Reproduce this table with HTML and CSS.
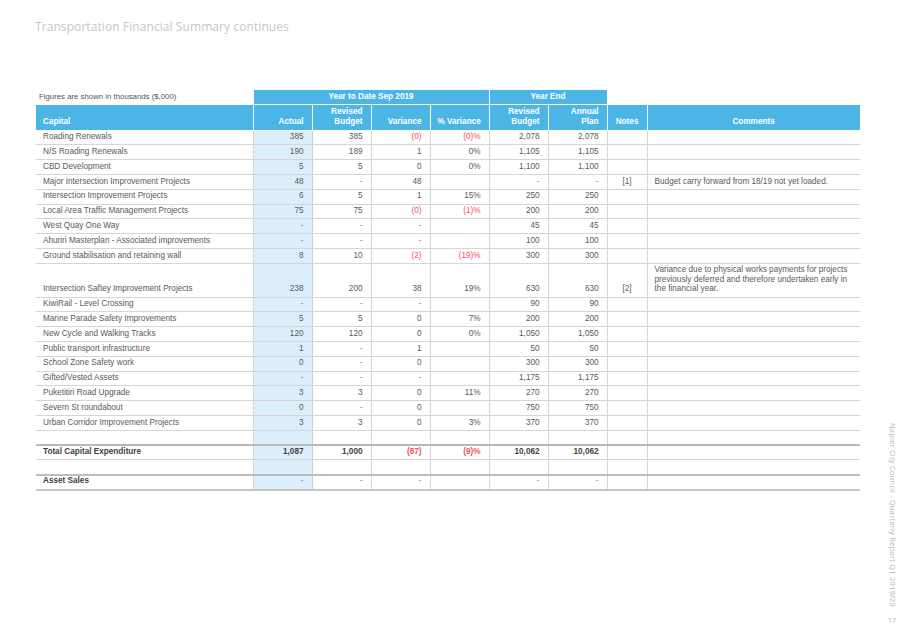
FILE: index.html
```html
<!DOCTYPE html>
<html lang="en">
<head>
<meta charset="utf-8">
<title>Transportation Financial Summary continues</title>
<link rel="stylesheet" href="styles.css">
</head>
<body>
<div class="page">
  <main class="main">
    <h1 class="title">Transportation Financial Summary continues</h1>
    <table class="fin">
      <colgroup>
        <col class="c-name"><col class="c-num"><col class="c-num"><col class="c-num"><col class="c-num"><col class="c-num"><col class="c-num"><col class="c-notes"><col class="c-comm">
      </colgroup>
      <thead>
        <tr class="h1">
          <th class="note-fig">Figures are shown in thousands ($,000)</th>
          <th class="blue ctr" colspan="4">Year to Date Sep 2019</th>
          <th class="blue ctr" colspan="2">Year End</th>
          <th class="blank" colspan="2"></th>
        </tr>
        <tr class="h2">
          <th class="blue lft">Capital</th>
          <th class="blue">Actual</th>
          <th class="blue">Revised<br>Budget</th>
          <th class="blue">Variance</th>
          <th class="blue">% Variance</th>
          <th class="blue">Revised<br>Budget</th>
          <th class="blue">Annual<br>Plan</th>
          <th class="blue ctr">Notes</th>
          <th class="blue ctr">Comments</th>
        </tr>
      </thead>
      <tbody>
        <tr><td>Roading Renewals</td><td class="act">385</td><td>385</td><td class="neg">(0)</td><td class="neg">(0)%</td><td>2,078</td><td>2,078</td><td class="nt"></td><td class="cm"></td></tr>
        <tr><td>N/S Roading Renewals</td><td class="act">190</td><td>189</td><td>1</td><td>0%</td><td>1,105</td><td>1,105</td><td class="nt"></td><td class="cm"></td></tr>
        <tr><td>CBD Development</td><td class="act">5</td><td>5</td><td>0</td><td>0%</td><td>1,100</td><td>1,100</td><td class="nt"></td><td class="cm"></td></tr>
        <tr><td>Major Intersection Improvement Projects</td><td class="act">48</td><td class="dash">-</td><td>48</td><td></td><td class="dash">-</td><td class="dash">-</td><td class="nt">[1]</td><td class="cm">Budget carry forward from 18/19 not yet loaded.</td></tr>
        <tr><td>Intersection Improvement Projects</td><td class="act">6</td><td>5</td><td>1</td><td>15%</td><td>250</td><td>250</td><td class="nt"></td><td class="cm"></td></tr>
        <tr><td>Local Area Traffic Management Projects</td><td class="act">75</td><td>75</td><td class="neg">(0)</td><td class="neg">(1)%</td><td>200</td><td>200</td><td class="nt"></td><td class="cm"></td></tr>
        <tr><td>West Quay One Way</td><td class="act dash">-</td><td class="dash">-</td><td class="dash">-</td><td></td><td>45</td><td>45</td><td class="nt"></td><td class="cm"></td></tr>
        <tr><td>Ahuriri Masterplan - Associated improvements</td><td class="act dash">-</td><td class="dash">-</td><td class="dash">-</td><td></td><td>100</td><td>100</td><td class="nt"></td><td class="cm"></td></tr>
        <tr><td>Ground stabilisation and retaining wall</td><td class="act">8</td><td>10</td><td class="neg">(2)</td><td class="neg">(19)%</td><td>300</td><td>300</td><td class="nt"></td><td class="cm"></td></tr>
        <tr class="tall"><td>Intersection Saftey Improvement Projects</td><td class="act">238</td><td>200</td><td>38</td><td>19%</td><td>630</td><td>630</td><td class="nt">[2]</td><td class="cm">Variance due to physical works payments for projects<br>previously deferred and therefore undertaken early in<br>the financial year.</td></tr>
        <tr><td>KiwiRail - Level Crossing</td><td class="act dash">-</td><td class="dash">-</td><td class="dash">-</td><td></td><td>90</td><td>90</td><td class="nt"></td><td class="cm"></td></tr>
        <tr><td>Marine Parade Safety Improvements</td><td class="act">5</td><td>5</td><td>0</td><td>7%</td><td>200</td><td>200</td><td class="nt"></td><td class="cm"></td></tr>
        <tr><td>New Cycle and Walking Tracks</td><td class="act">120</td><td>120</td><td>0</td><td>0%</td><td>1,050</td><td>1,050</td><td class="nt"></td><td class="cm"></td></tr>
        <tr><td>Public transport infrastructure</td><td class="act">1</td><td class="dash">-</td><td>1</td><td></td><td>50</td><td>50</td><td class="nt"></td><td class="cm"></td></tr>
        <tr><td>School Zone Safety work</td><td class="act">0</td><td class="dash">-</td><td>0</td><td></td><td>300</td><td>300</td><td class="nt"></td><td class="cm"></td></tr>
        <tr><td>Gifted/Vested Assets</td><td class="act dash">-</td><td class="dash">-</td><td class="dash">-</td><td></td><td>1,175</td><td>1,175</td><td class="nt"></td><td class="cm"></td></tr>
        <tr><td>Puketitiri Road Upgrade</td><td class="act">3</td><td>3</td><td>0</td><td>11%</td><td>270</td><td>270</td><td class="nt"></td><td class="cm"></td></tr>
        <tr><td>Severn St roundabout</td><td class="act">0</td><td class="dash">-</td><td>0</td><td></td><td>750</td><td>750</td><td class="nt"></td><td class="cm"></td></tr>
        <tr><td>Urban Corridor Improvement Projects</td><td class="act">3</td><td>3</td><td>0</td><td>3%</td><td>370</td><td>370</td><td class="nt"></td><td class="cm"></td></tr>
        <tr class="spacer"><td></td><td class="act"></td><td></td><td></td><td></td><td></td><td></td><td class="nt"></td><td class="cm"></td></tr>
        <tr class="total"><td>Total Capital Expenditure</td><td class="act">1,087</td><td>1,000</td><td class="neg">(87)</td><td class="neg">(9)%</td><td>10,062</td><td>10,062</td><td class="nt"></td><td class="cm"></td></tr>
        <tr class="spacer"><td></td><td class="act"></td><td></td><td></td><td></td><td></td><td></td><td class="nt"></td><td class="cm"></td></tr>
        <tr class="asset"><td class="bold">Asset Sales</td><td class="act dash">-</td><td class="dash">-</td><td class="dash">-</td><td></td><td class="dash">-</td><td class="dash">-</td><td class="nt"></td><td class="cm"></td></tr>
      </tbody>
    </table>
  </main>
  <aside class="side">
    <span class="side-text">Napier City Council - Quarterly Report Q1 2019/20</span>
    <span class="side-num">17</span>
  </aside>
</div>
</body>
</html>
```
FILE: styles.css
```css
* { box-sizing: border-box; }
html, body { margin: 0; padding: 0; background: #ffffff; }
body { font-family: "Liberation Sans", Arial, sans-serif; }

.page {
  width: 906px;
  height: 635px;
  display: flex;
  overflow: hidden;
}

.main {
  width: 860px;
  padding: 0 0 0 36px;
}

.title {
  margin: 0;
  padding: 19px 0 0 0;
  height: 90px;
  font-family: "Open Sans", "DejaVu Sans", sans-serif;
  font-weight: 400;
  font-size: 12px;
  line-height: 16px;
  letter-spacing: 0.08px;
  color: #c6c6c6;
  margin-left: -1px;
}

.fin {
  width: 823px;
  table-layout: fixed;
  border-collapse: collapse;
  font-size: 8.2px;
  line-height: 9.6px;
  color: #5a5a5a;
}

.c-name { width: 217px; }
.c-num { width: 59px; }
.c-notes { width: 40px; }
.c-comm { width: 213px; }

.fin th, .fin td {
  padding: 0 8px 2.5px 7px;
  vertical-align: bottom;
  white-space: nowrap;
  overflow: hidden;
}

.fin thead th {
  color: #ffffff;
  font-weight: 700;
  text-align: right;
}

.fin th.blue {
  background: #4bb5e5;
  border: 1px solid #ffffff;
}
.fin th.blue:first-child { border-left: 0; }
.fin th.lft { text-align: left; }
.fin th.ctr { text-align: center; padding-left: 4px; padding-right: 4px; }

.fin .h1 { height: 14px; }
.fin .h1 th { padding-bottom: 2px; border-top: 0; }
.fin .h1 th.note-fig {
  text-align: left;
  font-weight: 400;
  font-size: 7.8px;
  color: #555555;
  padding-left: 3px;
  border: 0;
}
.fin .h1 th.blank { background: transparent; border: 0; border-left: 1px solid #ffffff; }

.fin .h2 { height: 26px; }
.fin .h2 th { padding-bottom: 3px; }

.fin tbody tr { height: 14.82px; }
.fin tbody td {
  text-align: right;
  border-bottom: 1px solid #d6d6d6;
  border-right: 1px solid #d6d6d6;
}
.fin tbody td:first-child { text-align: left; }
.fin tbody td.cm { border-right: 0; text-align: left; white-space: normal; }
.fin tbody td.nt { text-align: center; padding-left: 2px; padding-right: 2px; }

.fin tbody td.act {
  background: #ddeefb;
  border-left: 1px solid #bcd3e4;
  border-right: 1px solid #bcd3e4;
}

.fin .neg { color: #f0525c; }
.fin .dash { color: #8a8a8a; }

.fin tr.tall { height: 33.7px; }

.fin tr.total td {
  font-weight: 700;
  color: #3f3f3f;
  border-top: 2px solid #b8b8b8;
}
.fin tr.total td.neg { color: #f0525c; }

.fin tr.asset td {
  border-top: 2px solid #bdbdbd;
  border-bottom: 2px solid #c6c6c6;
}
.fin td.bold { font-weight: 700; color: #3f3f3f; }

.side {
  flex: 1;
  display: flex;
  flex-direction: column;
  align-items: center;
  justify-content: flex-end;
  padding: 0 0 10px 18px;
  font-family: "Open Sans", "DejaVu Sans", sans-serif;
  color: #b4b4b4;
  font-size: 7.5px;
}
.side-text {
  writing-mode: vertical-rl;
  line-height: 9px;
  letter-spacing: 0.2px;
  margin-bottom: 9px;
}
.side-num {
  line-height: 9px;
}
```
